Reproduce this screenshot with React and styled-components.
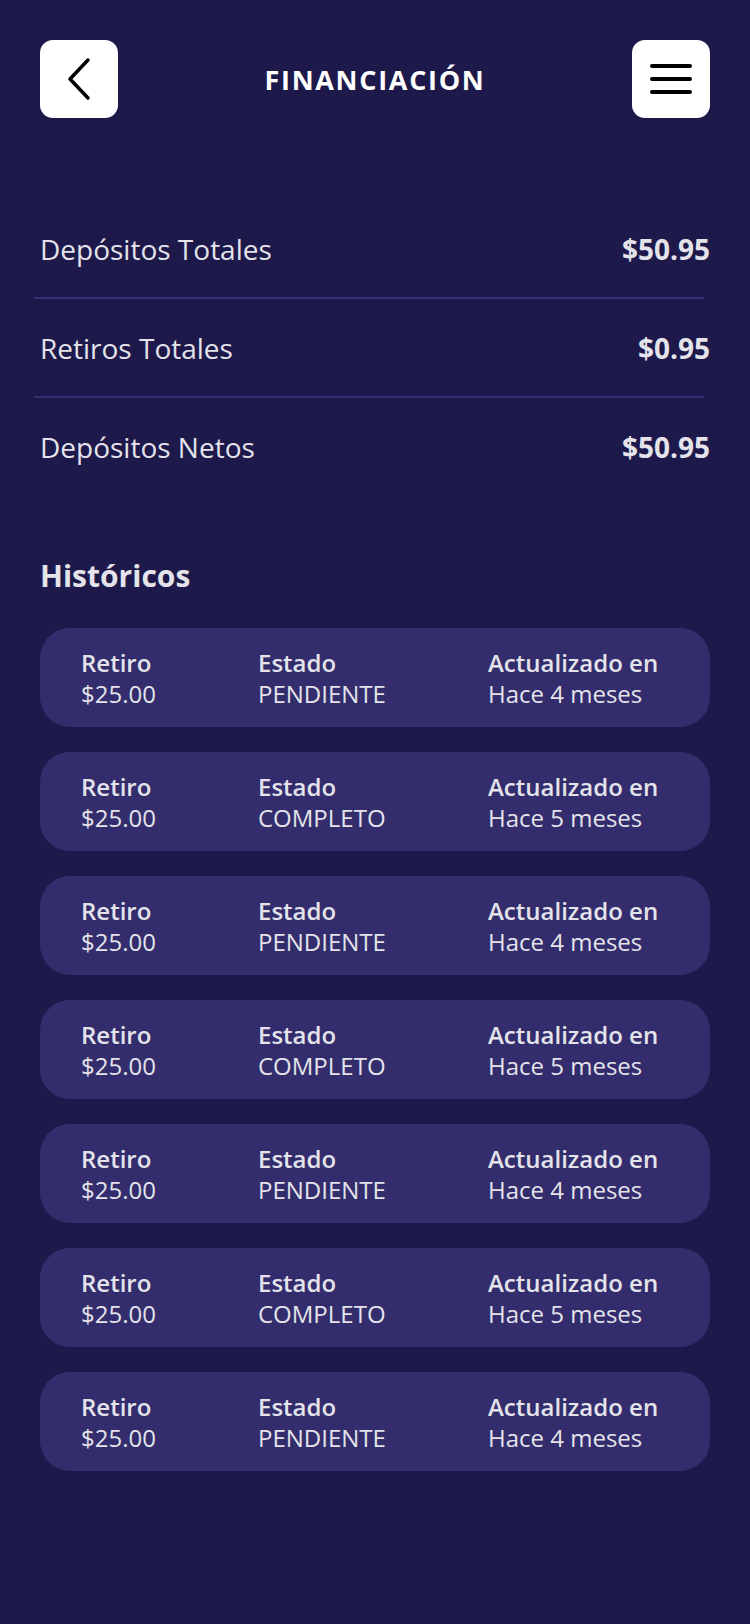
import React from 'react'
import styled, { createGlobalStyle } from 'styled-components'

const GlobalStyle = createGlobalStyle`
  html, body {
    margin: 0;
    padding: 0;
    background-color: #1d194b;
  }
  body {
    font-family: 'Open Sans', 'Noto Sans', sans-serif;
    color: #e4e3ea;
  }
`

const Page = styled.div`
  min-height: 1624px;
  box-sizing: border-box;
  padding: 40px 40px 0;
  background-color: #1d194b;
`

const Header = styled.header`
  display: flex;
  align-items: center;
  justify-content: space-between;
  height: 78px;
`

const IconButton = styled.button`
  display: flex;
  align-items: center;
  justify-content: center;
  width: 78px;
  height: 78px;
  padding: 0;
  border: none;
  border-radius: 13px;
  background-color: #ffffff;
  cursor: pointer;
`

const Title = styled.h1`
  margin: 0;
  font-size: 27px;
  font-weight: 700;
  letter-spacing: 1.7px;
  color: #ffffff;
`

const Summary = styled.section`
  margin-top: 82px;
`

const SummaryRow = styled.div`
  display: flex;
  align-items: center;
  justify-content: space-between;
  height: 97px;
`

const SummaryLabel = styled.span`
  font-size: 28px;
  font-weight: 400;
`

const SummaryValue = styled.span`
  font-size: 28px;
  font-weight: 700;
`

const Divider = styled.hr`
  height: 2px;
  margin: 0 6px 0 -6px;
  border: none;
  background-color: #362f73;
`

const SectionTitle = styled.h2`
  margin: 61px 0 32px;
  font-size: 30px;
  line-height: 40px;
  font-weight: 700;
`

const History = styled.div`
  display: flex;
  flex-direction: column;
  gap: 25px;
`

const Card = styled.div`
  display: grid;
  grid-template-columns: 177px 230px 1fr;
  align-items: center;
  height: 99px;
  box-sizing: border-box;
  padding-left: 41px;
  border-radius: 30px;
  background-color: #332d6d;
`

const Cell = styled.div`
  display: flex;
  flex-direction: column;
  font-size: 24px;
  line-height: 31px;
`

const CellLabel = styled.span`
  font-weight: 600;
`

const CellValue = styled.span`
  font-weight: 400;
`

const totals = [
  { label: 'Depósitos Totales', value: '$50.95' },
  { label: 'Retiros Totales', value: '$0.95' },
  { label: 'Depósitos Netos', value: '$50.95' },
]

const history = [
  { status: 'PENDIENTE', updated: 'Hace 4 meses' },
  { status: 'COMPLETO', updated: 'Hace 5 meses' },
  { status: 'PENDIENTE', updated: 'Hace 4 meses' },
  { status: 'COMPLETO', updated: 'Hace 5 meses' },
  { status: 'PENDIENTE', updated: 'Hace 4 meses' },
  { status: 'COMPLETO', updated: 'Hace 5 meses' },
  { status: 'PENDIENTE', updated: 'Hace 4 meses' },
]

const BackIcon = () => (
  <svg width="40" height="46" viewBox="0 0 40 46" fill="none">
    <path d="M29 4 L11 23 L29 42" stroke="#000" strokeWidth="3.5" strokeLinecap="round" strokeLinejoin="round" />
  </svg>
)

const MenuIcon = () => (
  <svg width="44" height="32" viewBox="0 0 44 32" fill="none">
    <g stroke="#000" strokeWidth="4" strokeLinecap="round">
      <line x1="3" y1="3" x2="41" y2="3" />
      <line x1="3" y1="16" x2="41" y2="16" />
      <line x1="3" y1="29" x2="41" y2="29" />
    </g>
  </svg>
)

const App = () => {
  return (
    <Page>
      <GlobalStyle />
      <Header>
        <IconButton aria-label="Volver">
          <BackIcon />
        </IconButton>
        <Title>FINANCIACIÓN</Title>
        <IconButton aria-label="Menú">
          <MenuIcon />
        </IconButton>
      </Header>

      <Summary>
        {totals.map((row, i) => (
          <React.Fragment key={row.label}>
            <SummaryRow>
              <SummaryLabel>{row.label}</SummaryLabel>
              <SummaryValue>{row.value}</SummaryValue>
            </SummaryRow>
            {i < totals.length - 1 && <Divider />}
          </React.Fragment>
        ))}
      </Summary>

      <SectionTitle>Históricos</SectionTitle>
      <History>
        {history.map((item, i) => (
          <Card key={i}>
            <Cell>
              <CellLabel>Retiro</CellLabel>
              <CellValue>$25.00</CellValue>
            </Cell>
            <Cell>
              <CellLabel>Estado</CellLabel>
              <CellValue>{item.status}</CellValue>
            </Cell>
            <Cell>
              <CellLabel>Actualizado en</CellLabel>
              <CellValue>{item.updated}</CellValue>
            </Cell>
          </Card>
        ))}
      </History>
    </Page>
  )
}

export default App
